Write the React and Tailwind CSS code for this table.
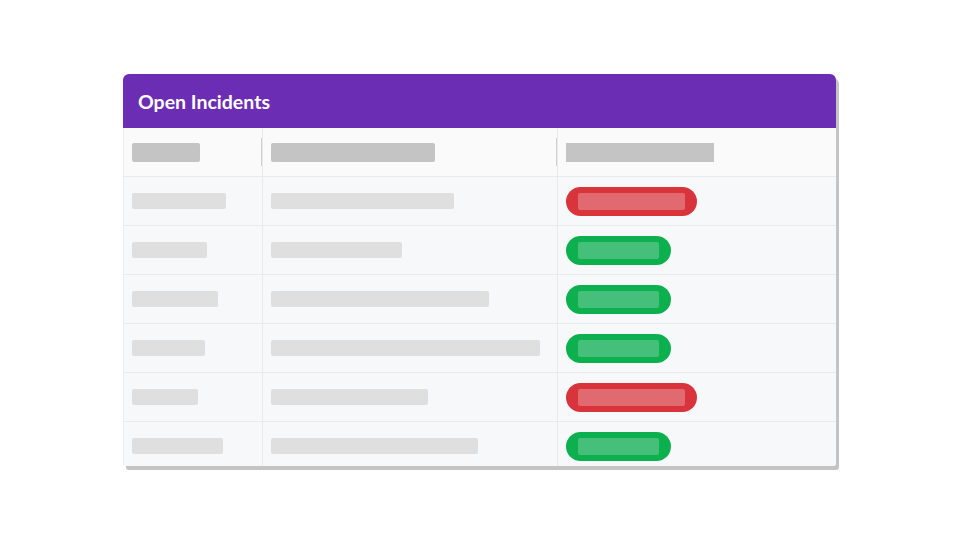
import React from "react";

const rows = [
  { a: 94, b: 183, s: "red" },
  { a: 75, b: 131, s: "green" },
  { a: 86, b: 218, s: "green" },
  { a: 73, b: 269, s: "green" },
  { a: 66, b: 157, s: "red" },
  { a: 91, b: 207, s: "green" },
];

function Pill({ s }) {
  if (s === "red") {
    return (
      <div className="flex h-[29px] w-[131px] items-center rounded-full bg-[#d9333b] px-[12px]">
        <div className="h-[17px] w-full rounded-[2px] bg-[#e06a70]" />
      </div>
    );
  }
  return (
    <div className="flex h-[29px] w-[105px] items-center rounded-full bg-[#0cb04e] px-[12px]">
      <div className="h-[17px] w-full rounded-[2px] bg-[#46bf7b]" />
    </div>
  );
}

export default function App() {
  return (
    <div className="flex h-[540px] w-[960px] bg-white" style={{ fontFamily: "Lato, 'Open Sans', sans-serif" }}>
      <div className="ml-[123px] mt-[74px] h-[392px] w-[713px] overflow-hidden rounded-t-[6px] rounded-b-[3px] bg-[#f8f9fa] shadow-[3px_4px_0_0_#c4c4c4]">
        <div className="flex h-[54px] items-center bg-[#6a2db4] pl-[15px] pt-[2px]">
          <span className="text-[19.5px] font-bold text-white">Open Incidents</span>
        </div>
        <div className="flex h-[49px] border-b border-[#e9eaeb] bg-[#fafafa]">
          <div className="relative flex w-[139px] items-center border-l border-[#eceded] pl-[8px]">
            <div className="h-[19px] w-[68px] rounded-[2px] bg-[#c4c4c4]" />
            <div className="absolute right-0 top-[10px] h-[28px] w-px bg-[#cfcfcf]" />
          </div>
          <div className="relative flex w-[295px] items-center border-l border-[#e9eaeb] pl-[8px]">
            <div className="h-[19px] w-[164px] rounded-[2px] bg-[#c4c4c4]" />
            <div className="absolute right-0 top-[10px] h-[28px] w-px bg-[#cfcfcf]" />
          </div>
          <div className="flex flex-1 items-center border-l border-[#e9eaeb] pl-[8px]">
            <div className="h-[19px] w-[148px] bg-[#c4c4c4]" />
          </div>
        </div>
        {rows.map((r, i) => (
          <div key={i} className="flex h-[49px] border-b border-[#e9eaeb] bg-[#f7f8f9]">
            <div className="flex w-[139px] items-center border-l border-[#eceded] pl-[8px]">
              <div className="h-[16px] rounded-[2px] bg-[#dfdfdf]" style={{ width: r.a }} />
            </div>
            <div className="flex w-[295px] items-center border-l border-[#e9eaeb] pl-[8px]">
              <div className="h-[16px] rounded-[2px] bg-[#dfdfdf]" style={{ width: r.b }} />
            </div>
            <div className="flex flex-1 items-center border-l border-[#e9eaeb] pl-[8px]">
              <Pill s={r.s} />
            </div>
          </div>
        ))}
      </div>
    </div>
  );
}
